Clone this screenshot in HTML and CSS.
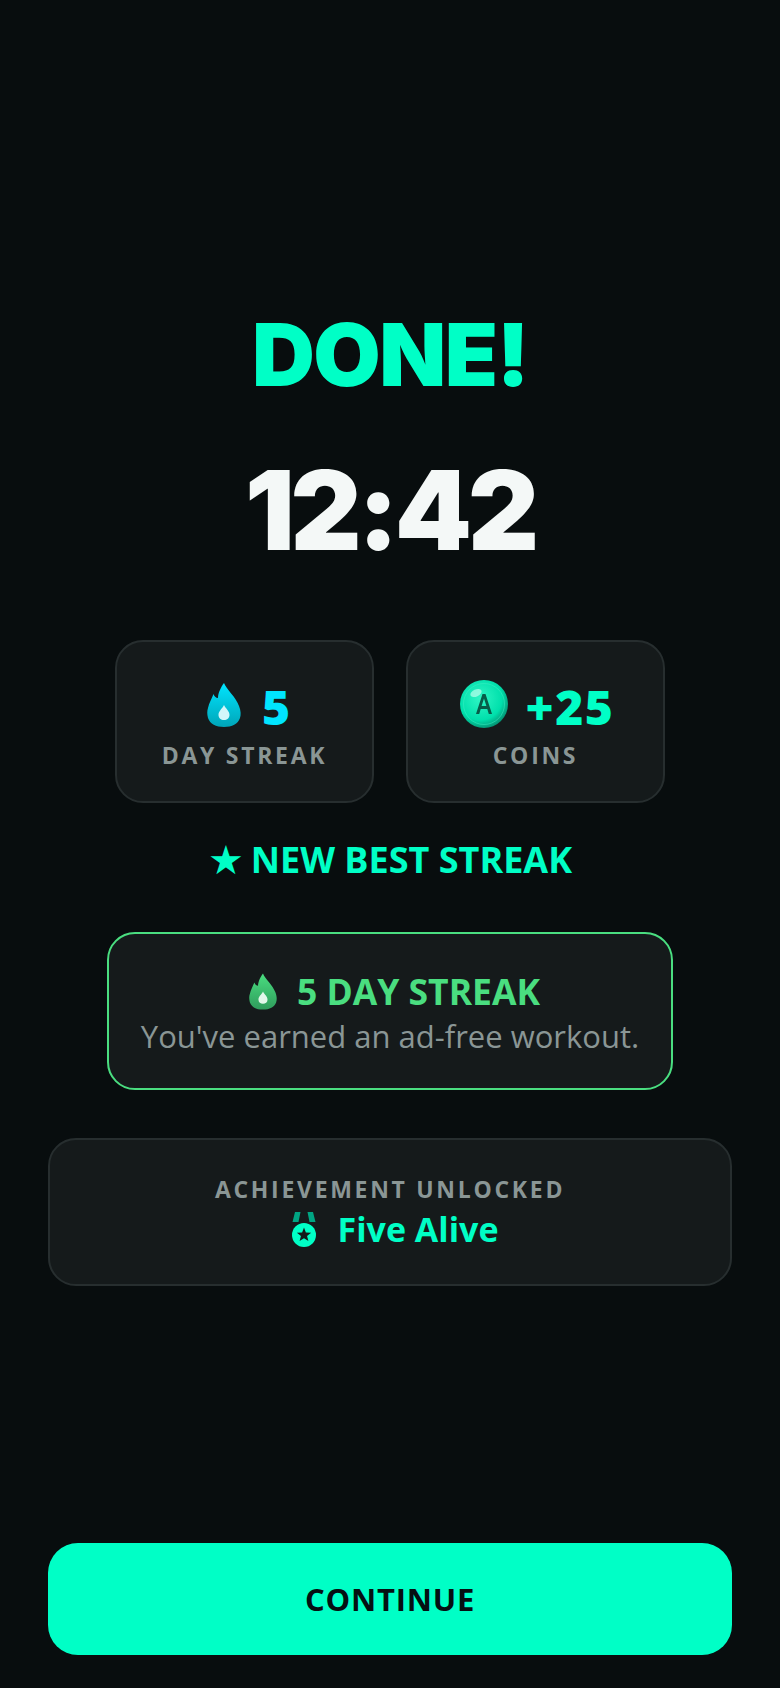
FILE: index.html
```html
<!DOCTYPE html>
<html lang="en">
<head>
<meta charset="utf-8">
<title>Done</title>
<link rel="stylesheet" href="styles.css">
</head>
<body>
<main class="screen">
  <section class="content">
    <h1 class="done">DONE!</h1>
    <div class="time">12:42</div>
    <div class="stats">
      <div class="card stat">
        <div class="stat-value streak-value">
          <svg class="flame" viewBox="0 0 34 44" aria-hidden="true">
            <defs><linearGradient id="fb" x1="0" y1="0" x2="0" y2="1"><stop offset="0" stop-color="#00e5ff"/><stop offset="1" stop-color="#00a5b8"/></linearGradient></defs>
            <path fill="url(#fb)" d="M17 0C19 6 29 14 32 23C34 28 34 32 33 35C31 41 25 44 17 44C9 44 3 41 1 35C0 31 0 28 1 25C2 20 5 15 6.500 11C7 13 9 15 11 15C11 10 14 4 17 0Z"/>
            <path fill="#d2f6fa" d="M17 22C19 26 22.500 28 22.500 32C22.500 35 20 37 17 37C14 37 11.500 35 11.500 32C11.500 28 15 26 17 22Z"/>
          </svg>
          <span>5</span>
        </div>
        <div class="label">DAY STREAK</div>
      </div>
      <div class="card stat">
        <div class="stat-value coin-value">
          <svg class="coin" viewBox="0 0 48 48" aria-hidden="true">
            <defs>
              <radialGradient id="cg" cx=".42" cy=".38" r=".7"><stop offset="0" stop-color="#2ff5c4"/><stop offset=".65" stop-color="#00e0ac"/><stop offset="1" stop-color="#057a60"/></radialGradient>
            </defs>
            <circle cx="24" cy="24" r="24" fill="url(#cg)"/>
            <circle cx="24" cy="24" r="20.500" fill="none" stroke="#3df0c4" stroke-opacity=".5" stroke-width="1"/>
            <ellipse cx="16" cy="13" rx="6" ry="3.500" fill="#c9fff0" fill-opacity=".65" transform="rotate(-25 16 13)"/>
            <path fill="#075c49" d="M22.500 14H25.500L32 34H28.800L27.300 29H20.700L19.200 34H16ZM21.600 26H26.400L24 18.500Z"/>
          </svg>
          <span>+25</span>
        </div>
        <div class="label">COINS</div>
      </div>
    </div>
    <div class="best"><span class="best-star">★</span><span>NEW BEST STREAK</span></div>
    <div class="card reward">
      <div class="reward-title">
        <svg class="flame-small" viewBox="0 0 34 44" aria-hidden="true">
          <defs><linearGradient id="fg" x1="0" y1="0" x2="0" y2="1"><stop offset="0" stop-color="#4ade80"/><stop offset="1" stop-color="#2f9c5c"/></linearGradient></defs>
          <path fill="url(#fg)" d="M17 0C19 6 29 14 32 23C34 28 34 32 33 35C31 41 25 44 17 44C9 44 3 41 1 35C0 31 0 28 1 25C2 20 5 15 6.500 11C7 13 9 15 11 15C11 10 14 4 17 0Z"/>
          <path fill="#e2f7ea" d="M17 22C19 26 22.500 28 22.500 32C22.500 35 20 37 17 37C14 37 11.500 35 11.500 32C11.500 28 15 26 17 22Z"/>
        </svg>
        <span>5 DAY STREAK</span>
      </div>
      <p class="reward-text">You've earned an ad-free workout.</p>
    </div>
    <div class="card achievement">
      <div class="label achievement-label">ACHIEVEMENT UNLOCKED</div>
      <div class="achievement-name">
        <svg class="medal" viewBox="0 0 24 35" aria-hidden="true">
          <path fill="#00a583" d="M3 0H8.500L6.500 10H.5ZM15.500 0H21L23.500 10H17.500Z"/>
          <circle cx="12" cy="23" r="12" fill="#00ffc6"/>
          <path fill="#14191a" d="M12 15.500L13.880 20.410L19.130 20.680L15.040 23.990L16.410 29.070L12 26.200L7.590 29.070L8.960 23.990L4.870 20.680L10.120 20.410Z"/>
        </svg>
        <span>Five Alive</span>
      </div>
    </div>
  </section>
  <button class="continue" type="button">CONTINUE</button>
</main>
</body>
</html>
```
FILE: styles.css
```css
* { box-sizing: border-box; }
html, body { margin: 0; height: 100%; }
body {
  background: #080d0e;
  font-family: "Open Sans", "Noto Sans", sans-serif;
  color: #f4f8f7;
}
.screen {
  height: 1688px;
  padding: 0 48px 33px;
  display: flex;
  flex-direction: column;
}
.content {
  flex: 1;
  display: flex;
  flex-direction: column;
  align-items: center;
  padding-top: 305px;
}
.done {
  margin: 0;
  font-family: Inter, sans-serif;
  font-weight: 900;
  font-size: 87px;
  line-height: 100px;
  letter-spacing: -1.500px;
  color: #00ffc6;
}
.time {
  margin-top: 40px;
  font-family: Inter, sans-serif;
  font-weight: 900;
  font-size: 110px;
  line-height: 130px;
  letter-spacing: -4px;
  color: #f4f8f7;
}
.card {
  background: #151a1b;
  border: 2px solid #272e2f;
  border-radius: 28px;
}
.stats {
  display: flex;
  gap: 32px;
  margin-top: 65px;
}
.stat {
  width: 259px;
  height: 163px;
  display: flex;
  flex-direction: column;
  align-items: center;
  padding-top: 40px;
}
.stat-value {
  display: flex;
  align-items: center;
  gap: 21px;
  height: 50px;
  margin-bottom: 8px;
  font-family: "Open Sans", sans-serif;
  font-weight: 800;
  font-size: 48px;
  line-height: 50px;
}
.streak-value { color: #00e5ff; margin-left: 8px; }
.coin-value { color: #00ffc6; gap: 18px; letter-spacing: 1.500px; margin-left: 3px; }
.flame { width: 34px; height: 44px; margin-top: -4px; }
.coin { width: 48px; height: 48px; margin-top: -6px; }
.label {
  font-weight: 700;
  font-size: 23px;
  line-height: 30px;
  letter-spacing: 2.700px;
  color: #8a9695;
}
.best {
  display: flex;
  align-items: center;
  gap: 7px;
  margin-top: 34px;
  font-weight: 700;
  font-size: 36px;
  line-height: 46px;
  color: #00ffc6;
}
.best-star {
  font-family: "DejaVu Sans", sans-serif;
  font-size: 40px;
  line-height: 46px;
}
.reward {
  width: 566px;
  height: 158px;
  margin-top: 49px;
  border-color: #4ade80;
  display: flex;
  flex-direction: column;
  align-items: center;
  padding-top: 34px;
}
.reward-title {
  display: flex;
  align-items: center;
  gap: 20px;
  margin-left: 9px;
  font-weight: 700;
  font-size: 35.500px;
  line-height: 46px;
  color: #4ade80;
}
.flame-small { width: 28px; height: 37px; }
.reward-text {
  margin: 1px 0 0;
  font-size: 31px;
  font-weight: 500;
  line-height: 42px;
  color: #8a9695;
}
.achievement {
  width: 684px;
  height: 148px;
  margin-top: 48px;
  display: flex;
  flex-direction: column;
  align-items: center;
  padding-top: 34px;
}
.achievement-name {
  display: flex;
  align-items: center;
  gap: 22px;
  margin-top: 3px;
  margin-left: 10px;
  font-weight: 700;
  font-size: 34px;
  line-height: 44px;
  color: #00ffc6;
}
.medal { width: 24px; height: 35px; }
.continue {
  height: 112px;
  width: 100%;
  border: 0;
  border-radius: 30px;
  background: #00ffc6;
  color: #051012;
  font-family: "Open Sans", sans-serif;
  font-weight: 700;
  font-size: 31px;
  letter-spacing: .8px;
}
```
